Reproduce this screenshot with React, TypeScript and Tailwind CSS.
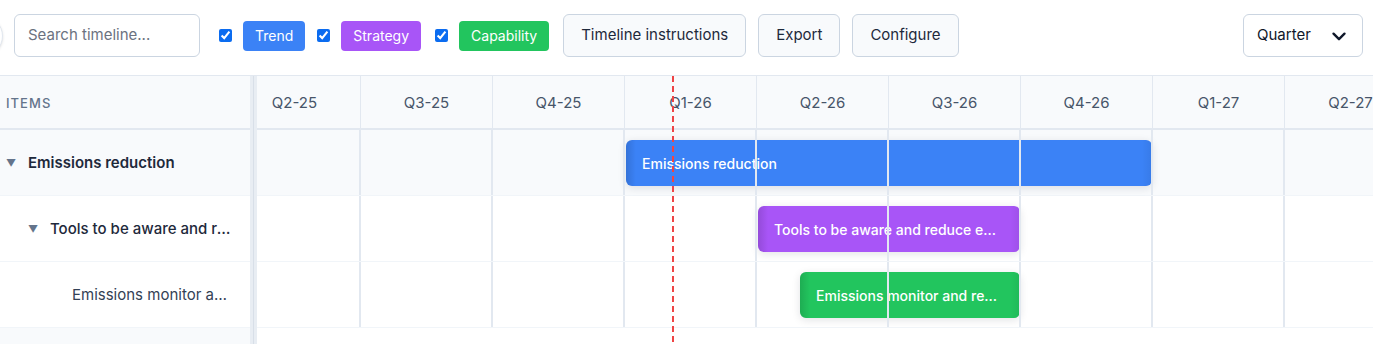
import React from "react";

const quarters = ["Q2-25", "Q3-25", "Q4-25", "Q1-26", "Q2-26", "Q3-26", "Q4-26", "Q1-27", "Q2-27"];

type Row = {
  label: string;
  level: number;
  caret: boolean;
  bg: string;
  bar: { left: number; width: number; color: string; text: string };
};

const rows: Row[] = [
  {
    label: "Emissions reduction",
    level: 0,
    caret: true,
    bg: "bg-[#f8fafc]",
    bar: { left: 397, width: 526, color: "bg-[#3b82f6]", text: "Emissions reduction" },
  },
  {
    label: "Tools to be aware and reduce emissions",
    level: 1,
    caret: true,
    bg: "bg-white",
    bar: { left: 529, width: 262, color: "bg-[#a855f7]", text: "Tools to be aware and reduce e..." },
  },
  {
    label: "Emissions monitor and reporting",
    level: 2,
    caret: false,
    bg: "bg-white",
    bar: { left: 571, width: 220, color: "bg-[#22c55e]", text: "Emissions monitor and re..." },
  },
];

function Chevron() {
  return (
    <svg width="22" height="22" viewBox="0 0 24 24" fill="none" stroke="#0f172a" strokeWidth="2.6" strokeLinecap="round" strokeLinejoin="round">
      <path d="M6 9.5l6 6 6-6" />
    </svg>
  );
}

function Tag({ label, color }: { label: string; color: string }) {
  return (
    <span className={`flex h-[30px] items-center rounded-[4px] px-[12px] text-[14px] text-white ${color}`}>{label}</span>
  );
}

function Check() {
  return <input type="checkbox" defaultChecked className="m-0 h-[13px] w-[13px] accent-[#0b6cf0]" />;
}

export default function App() {
  return (
    <div className="h-[344px] w-[1373px] overflow-hidden bg-white font-['Inter',sans-serif] text-[#1e293b]">
      {/* Toolbar */}
      <div className="h-[76px] border-b border-[#e2e8f0] pt-[14px]">
        <div className="flex h-[43px] items-center">
          <div className="ml-[-37px] mr-[11px] h-[40px] w-[40px] shrink-0 rounded-full border border-[#e2e8f0] bg-white shadow-sm" />
          <div className="flex h-[43px] w-[186px] items-center rounded-[6px] border border-[#cbd5e1] px-[13px] text-[15px] text-[#6b7280]">
            Search timeline...
          </div>
          <div className="ml-[19px] flex items-center">
            <Check />
            <div className="ml-[11px]">
              <Tag label="Trend" color="bg-[#3b82f6]" />
            </div>
          </div>
          <div className="ml-[12px] flex items-center">
            <Check />
            <div className="ml-[11px]">
              <Tag label="Strategy" color="bg-[#a855f7]" />
            </div>
          </div>
          <div className="ml-[14px] flex items-center">
            <Check />
            <div className="ml-[11px]">
              <Tag label="Capability" color="bg-[#22c55e]" />
            </div>
          </div>
          <div className="ml-[14px] flex gap-[12px]">
            {["Timeline instructions", "Export", "Configure"].map((b) => (
              <div
                key={b}
                className="flex h-[43px] items-center rounded-[6px] border border-[#cbd5e1] bg-[#f8fafc] px-[17px] text-[15px] text-[#1e293b]"
              >
                {b}
              </div>
            ))}
          </div>
          <div className="ml-auto mr-[10px] flex h-[43px] w-[120px] items-center justify-between rounded-[6px] border border-[#cbd5e1] bg-white pl-[13px] pr-[12px] text-[15px] text-[#0f172a]">
            <span>Quarter</span>
            <Chevron />
          </div>
        </div>
      </div>

      {/* Body */}
      <div className="flex h-[268px]">
        {/* Left panel */}
        <div className="w-[250px] shrink-0 bg-[#f8fafc]">
          <div className="flex h-[54px] items-center border-b-2 border-[#e2e8f0] pl-[6px] pt-[3px] text-[13px] font-medium uppercase tracking-[0.08em] text-[#64748b]">
            Items
          </div>
          {rows.map((r) => (
            <div
              key={r.label}
              className={`flex h-[66px] items-center border-b border-[#f1f5f9] pr-[17px] pt-[2px] ${r.bg}`}
              style={{ paddingLeft: 6 + r.level * 22 }}
            >
              {r.caret ? (
                <span className="w-[22px] shrink-0 text-[10px] text-[#64748b]">▼</span>
              ) : (
                <span className="w-[22px] shrink-0" />
              )}
              <span
                className={`truncate text-[15px] ${
                  r.level === 0 ? "font-semibold text-[#1e293b]" : r.level === 1 ? "font-medium text-[#1e293b]" : "font-normal text-[#334155]"
                }`}
              >
                {r.label}
              </span>
            </div>
          ))}
        </div>

        {/* Divider */}
        <div className="flex w-[7px] shrink-0 bg-[#e8edf3]">
          <div className="ml-[3px] w-[1px] bg-[#d8dfe8]" />
        </div>

        {/* Timeline */}
        <div className="relative flex-1 overflow-hidden bg-white">
          <div className="relative ml-[-28px] w-[1188px]">
            <div className="flex h-[54px] border-b-2 border-[#e2e8f0] bg-[#f8fafc]">
              {quarters.map((q) => (
                <div
                  key={q}
                  className="flex w-[132px] shrink-0 items-center justify-center border-r border-[#e2e8f0] pt-[3px] text-[15px] text-[#475569]"
                >
                  {q}
                </div>
              ))}
            </div>
            {rows.map((r) => (
              <div key={r.label} className={`relative h-[66px] border-b border-[#f1f5f9] ${r.bg}`}>
                <div
                  className={`absolute top-[10px] flex h-[46px] items-center overflow-hidden rounded-[6px] pl-[16px] text-[14px] font-medium text-white shadow-[0_2px_8px_rgba(15,23,42,0.12)] ${r.bar.color}`}
                  style={{ left: r.bar.left, width: r.bar.width }}
                >
                  <div className="absolute inset-y-0 left-0 w-[10px] bg-gradient-to-r from-[rgba(0,0,0,0.12)] to-transparent" />
                  <div className="absolute inset-y-0 right-0 w-[10px] bg-gradient-to-l from-[rgba(0,0,0,0.06)] to-transparent" />
                  <span className="relative whitespace-nowrap">{r.bar.text}</span>
                </div>
                <div className="pointer-events-none absolute inset-0 flex">
                  {quarters.map((q) => (
                    <div key={q} className="w-[132px] shrink-0 border-r-2 border-[#e2e8f0]" />
                  ))}
                </div>
              </div>
            ))}
            {/* today marker */}
            <div className="absolute left-[443px] top-0 h-[268px] w-[2px] bg-[repeating-linear-gradient(to_bottom,#ef4444_0px,#ef4444_6px,transparent_6px,transparent_10px)]" />
          </div>
        </div>
      </div>
    </div>
  );
}
